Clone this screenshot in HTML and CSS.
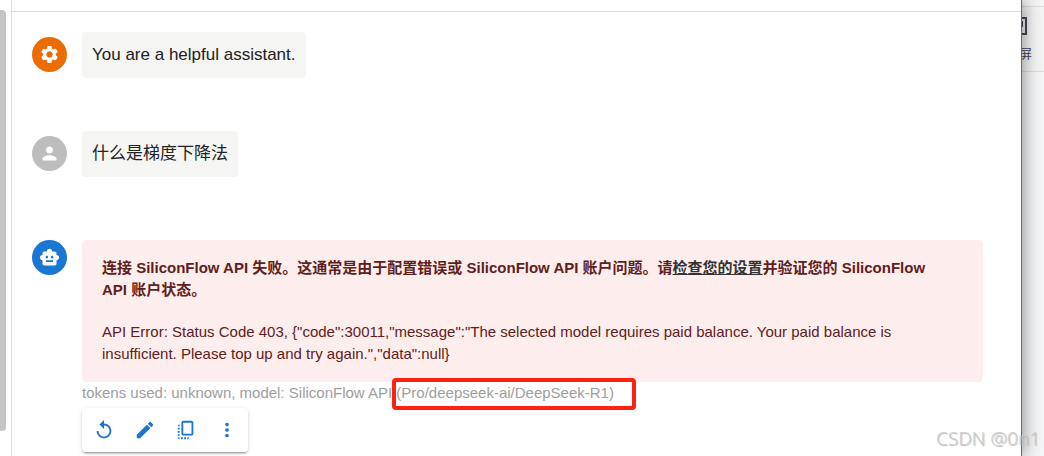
FILE: index.html
```html
<!DOCTYPE html>
<html lang="zh-CN">
<head>
    <meta charset="UTF-8">
    <meta name="viewport" content="width=device-width, initial-scale=1.0">
    <title>Chat</title>
    <link rel="stylesheet" href="styles.css">
</head>
<body>
    <div class="app">
        <div class="gutter">
            <div class="scroll-thumb"></div>
        </div>
        <main class="chat">
            <div class="topbar"></div>
            <div class="messages">
                <div class="message">
                    <div class="avatar system">
                        <svg viewBox="0 0 24 24"><path d="M19.14 12.94c.04-.3.06-.61.06-.94 0-.32-.02-.64-.07-.94l2.03-1.58c.18-.14.23-.41.12-.61l-1.92-3.32c-.12-.22-.37-.29-.59-.22l-2.39.96c-.5-.38-1.03-.7-1.62-.94l-.36-2.54c-.04-.24-.24-.41-.48-.41h-3.84c-.24 0-.43.17-.47.41l-.36 2.54c-.59.24-1.13.57-1.62.94l-2.39-.96c-.22-.08-.47 0-.59.22L2.74 8.87c-.12.21-.08.47.12.61l2.03 1.58c-.05.3-.09.63-.09.94s.02.64.07.94l-2.03 1.58c-.18.14-.23.41-.12.61l1.92 3.32c.12.22.37.29.59.22l2.39-.96c.5.38 1.03.7 1.62.94l.36 2.54c.05.24.24.41.48.41h3.84c.24 0 .44-.17.47-.41l.36-2.54c.59-.24 1.13-.56 1.62-.94l2.39.96c.22.08.47 0 .59-.22l1.92-3.32c.12-.22.07-.47-.12-.61l-2.01-1.58zM12 15.6c-1.98 0-3.6-1.62-3.6-3.6s1.62-3.6 3.6-3.6 3.6 1.62 3.6 3.6-1.62 3.6-3.6 3.6z"/></svg>
                    </div>
                    <p class="bubble">You are a helpful assistant.</p>
                </div>
                <div class="message">
                    <div class="avatar user">
                        <svg viewBox="0 0 24 24"><path d="M12 12c2.21 0 4-1.79 4-4s-1.79-4-4-4-4 1.79-4 4 1.79 4 4 4zm0 2c-2.67 0-8 1.34-8 4v2h16v-2c0-2.66-5.33-4-8-4z"/></svg>
                    </div>
                    <p class="bubble">什么是梯度下降法</p>
                </div>
                <div class="message reply">
                    <div class="avatar bot">
                        <svg viewBox="0 0 24 24"><path d="M20 9V7c0-1.100-.9-2-2-2h-3c0-1.660-1.340-3-3-3S9 3.340 9 5H6c-1.100 0-2 .9-2 2v2c-1.660 0-3 1.340-3 3s1.340 3 3 3v4c0 1.100.9 2 2 2h12c1.100 0 2-.9 2-2v-4c1.660 0 3-1.340 3-3s-1.340-3-3-3zM7.500 11.500c0-.83.67-1.500 1.500-1.500s1.500.67 1.500 1.500S9.830 13 9 13s-1.500-.67-1.500-1.500zM16 17H8v-2h8v2zm-1-4c-.83 0-1.500-.67-1.500-1.500S14.170 10 15 10s1.500.67 1.500 1.500S15.830 13 15 13z"/></svg>
                    </div>
                    <div class="content">
                        <div class="alert">
                            <p class="alert-title">连接 SiliconFlow API 失败。这通常是由于配置错误或 SiliconFlow API 账户问题。请<a href="#settings">检查您的设置</a>并验证您的 SiliconFlow API 账户状态。</p>
                            <p>API Error: Status Code 403, {"code":30011,"message":"The selected model requires paid balance. Your paid balance is insufficient. Please top up and try again.","data":null}</p>
                        </div>
                        <p class="meta">tokens used: unknown, model: SiliconFlow API <span class="model">(Pro/deepseek-ai/DeepSeek-R1)</span></p>
                        <div class="actions">
                            <button type="button" aria-label="重试">
                                <svg viewBox="0 0 24 24"><path d="M12 5V1L7 6l5 5V7c3.310 0 6 2.690 6 6s-2.690 6-6 6-6-2.690-6-6H4c0 4.420 3.580 8 8 8s8-3.580 8-8-3.580-8-8-8z"/></svg>
                            </button>
                            <button type="button" aria-label="编辑">
                                <svg viewBox="0 0 24 24"><path d="M3 17.250V21h3.750L17.810 9.940l-3.750-3.750L3 17.250zM20.710 7.040c.39-.39.39-1.020 0-1.410l-2.340-2.340c-.39-.39-1.020-.39-1.410 0l-1.830 1.830 3.750 3.750 1.830-1.830z"/></svg>
                            </button>
                            <button type="button" aria-label="复制">
                                <svg viewBox="0 0 24 24"><path d="M18 2H9c-1.100 0-2 .9-2 2v12c0 1.100.9 2 2 2h9c1.100 0 2-.9 2-2V4c0-1.100-.9-2-2-2zm0 14H9V4h9v12zM3 15v-2h2v2H3zm0-5.500h2v2H3v-2zM10 20h2v2h-2v-2zm-7-1.500v-2h2v2H3zM5 22c-1.100 0-2-.9-2-2h2v2zm3.500 0h-2v-2h2v2zm5 0v-2h2c0 1.100-.9 2-2 2zM5 6v2H3c0-1.100.9-2 2-2z"/></svg>
                            </button>
                            <button type="button" aria-label="更多">
                                <svg viewBox="0 0 24 24"><path d="M12 8c1.100 0 2-.9 2-2s-.9-2-2-2-2 .9-2 2 .9 2 2 2zm0 2c-1.100 0-2 .9-2 2s.9 2 2 2 2-.9 2-2-.9-2-2-2zm0 6c-1.100 0-2 .9-2 2s.9 2 2 2 2-.9 2-2-.9-2-2-2z"/></svg>
                            </button>
                        </div>
                    </div>
                </div>
            </div>
        </main>
        <aside class="behind">
            <div class="tool">
                <svg viewBox="0 0 18 18"><path d="M1 1h16v16H1zM6 5h7v4H6z"/></svg>
                <span>屏</span>
            </div>
        </aside>
    </div>
    <div class="watermark">CSDN @0n1</div>
</body>
</html>
```

FILE: styles.css
```css
* {
    box-sizing: border-box;
}

body {
    margin: 0;
    font-family: "Liberation Sans", Arial, "Noto Sans CJK SC", sans-serif;
    font-size: 15px;
    line-height: 22px;
    color: #212121;
    background-color: #fff;
    overflow: hidden;
}

p {
    margin: 0;
}

.app {
    display: flex;
    min-height: 100vh;
}

/* left edge with the sidebar scrollbar */
.gutter {
    width: 12px;
    flex-shrink: 0;
    padding: 10px 0 25px;
    display: flex;
    border-right: 1px solid #dcdcdc;
}

.scroll-thumb {
    width: 6px;
    background-color: #c4c4c4;
    border-radius: 0 4px 4px 0;
}

.chat {
    flex: 1;
    min-width: 0;
    background-color: #fff;
    border-right: 1px solid #6a6a6a;
    box-shadow: 2px 0 16px rgba(0, 0, 0, 0.4);
    clip-path: inset(0 -40px 0 0);
    z-index: 1;
}

.topbar {
    height: 12px;
    border-bottom: 1px solid #dcdcdc;
}

.messages {
    padding: 20px 38px 4px 20px;
}

.message {
    display: flex;
    align-items: flex-start;
    gap: 15px;
    margin-bottom: 53px;
}

.message.reply {
    margin-top: 63px;
    margin-bottom: 0;
}

.avatar {
    width: 35px;
    height: 35px;
    margin-top: 5px;
    flex-shrink: 0;
    border-radius: 50%;
    display: flex;
    align-items: center;
    justify-content: center;
}

.reply .avatar {
    margin-top: 0;
}

.avatar svg {
    width: 21px;
    height: 21px;
    fill: #fff;
}

.system {
    background-color: #ed6c02;
}

.user {
    background-color: #bdbdbd;
}

.bot {
    background-color: #1976d2;
}

.bubble {
    padding: 10px;
    font-size: 17px;
    line-height: 26px;
    background-color: #f5f5f4;
    border-radius: 4px;
}

.content {
    flex: 1;
    min-width: 0;
}

.alert {
    padding: 17px 40px 17px 20px;
    color: #5f2120;
    background-color: #fdeded;
    border-radius: 4px;
}

.alert-title {
    margin-bottom: 20px;
    font-weight: bold;
}

.alert a {
    color: #333;
}

.meta {
    color: #9e9e9e;
}

.model {
    position: relative;
}

/* red frame round the model name */
.model::after {
    content: "";
    position: absolute;
    top: -6px;
    right: -22px;
    bottom: -9px;
    left: -4px;
    border: 4px solid #ff2012;
    border-radius: 4px;
}

.actions {
    display: inline-flex;
    margin-top: 4px;
    padding: 0 1px;
    border-radius: 4px;
    background-color: #fff;
    box-shadow: 0 3px 1px -2px rgba(0, 0, 0, 0.2), 0 2px 2px rgba(0, 0, 0, 0.14), 0 1px 5px rgba(0, 0, 0, 0.12);
}

.actions button {
    width: 41px;
    height: 44px;
    padding: 0;
    border: none;
    background: none;
    display: flex;
    align-items: center;
    justify-content: center;
    cursor: pointer;
}

.actions svg {
    width: 22px;
    height: 22px;
    fill: #1976d2;
}

/* window that shows behind the chat */
.behind {
    width: 22px;
    flex-shrink: 0;
    padding-top: 6px;
    background-color: #f4f5f7;
}

.tool {
    height: 66px;
    padding-top: 10px;
    margin-left: -13px;
    border-top: 1px solid #dcdcdc;
    border-bottom: 1px solid #dcdcdc;
    background-color: #f3f3f3;
    display: flex;
    flex-direction: column;
    gap: 9px;
    font-size: 13px;
    line-height: 20px;
    color: #45455a;
}

.tool svg {
    width: 18px;
    height: 18px;
    fill: none;
    stroke: #45455a;
    stroke-width: 2;
}

.tool span {
    padding-left: 10px;
}

.watermark {
    position: absolute;
    right: 4px;
    bottom: 5px;
    z-index: 2;
    font-family: "Open Sans", "Noto Sans", sans-serif;
    font-size: 19px;
    font-weight: 300;
    line-height: 26px;
    color: #ccc;
    text-shadow: 1px 1px 1px #aaa;
}
```
